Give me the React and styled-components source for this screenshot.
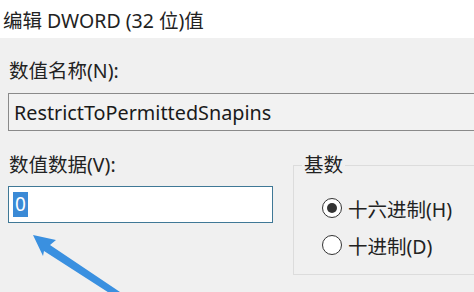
import styled, { createGlobalStyle } from 'styled-components';

const GlobalStyle = createGlobalStyle`
  html, body {
    margin: 0;
    padding: 0;
    background: #f0f0f0;
  }
  body {
    font-family: "Segoe UI", "Noto Sans", "Noto Sans CJK SC", sans-serif;
    color: #1a1a1a;
  }
`;

const Dialog = styled.div`
  position: relative;
  width: 474px;
  height: 292px;
  overflow: hidden;
  background: #f0f0f0;
`;

const TitleBar = styled.div`
  height: 38px;
  background: #ffffff;
  display: flex;
  align-items: center;
  padding-left: 3px;
  font-size: 19.5px;
  color: #222;
`;

const Body = styled.div`
  padding: 20px 0 0 8px;
  display: flex;
  flex-direction: column;
`;

const Label = styled.div`
  font-size: 19.5px;
  line-height: 26px;
  padding-left: 1px;
  color: #222;
`;

const NameBox = styled.div`
  margin-top: 9px;
  width: 490px;
  height: 38px;
  flex-shrink: 0;
  box-sizing: border-box;
  border: 1px solid #8a8a8a;
  background: #f2f2f2;
  display: flex;
  align-items: center;
  padding-left: 5px;
  font-size: 19.8px;
  color: #1a1a1a;
`;

const Row = styled.div`
  display: flex;
  gap: 20px;
  margin-top: 21px;
`;

const Column = styled.div`
  width: 265px;
  flex-shrink: 0;
  display: flex;
  flex-direction: column;
`;

const DataBox = styled.div`
  margin-top: 8px;
  height: 37px;
  box-sizing: border-box;
  border: 1px solid #3f7896;
  background: #ffffff;
  display: flex;
  align-items: center;
  padding-left: 4px;
`;

const Selected = styled.span`
  background: #3b8ad6;
  color: #ffffff;
  font-size: 19px;
  line-height: 25px;
  padding: 0 2px;
`;

const Group = styled.fieldset`
  margin: 0;
  padding: 18px 0 0 28px;
  width: 220px;
  height: 123px;
  flex-shrink: 0;
  box-sizing: border-box;
  border: 1px solid #dcdcdc;
  border-right: none;
  display: flex;
  flex-direction: column;
  gap: 13px;
`;

const Legend = styled.legend`
  font-size: 19.5px;
  line-height: 26px;
  padding: 0 2px;
  margin-left: -20px;
  color: #222;
`;

const Option = styled.label`
  display: flex;
  align-items: center;
  gap: 6px;
  font-size: 19.5px;
  color: #222;
  height: 24px;
`;

const Radio = styled.span`
  width: 20px;
  height: 20px;
  box-sizing: border-box;
  border-radius: 50%;
  border: 1.5px solid #333;
  background: #fff;
  display: flex;
  align-items: center;
  justify-content: center;
  &::after {
    content: '';
    width: 10px;
    height: 10px;
    border-radius: 50%;
    background: ${(p) => (p.checked ? '#333' : 'transparent')};
  }
`;

const Arrow = styled.svg`
  position: absolute;
  left: 0;
  top: 0;
  pointer-events: none;
`;

export default function App() {
  return (
    <Dialog>
      <GlobalStyle />
      <TitleBar>编辑 DWORD (32 位)值</TitleBar>
      <Body>
        <Label>数值名称(N):</Label>
        <NameBox>RestrictToPermittedSnapins</NameBox>
        <Row>
          <Column>
            <Label>数值数据(V):</Label>
            <DataBox>
              <Selected>0</Selected>
            </DataBox>
          </Column>
          <Group>
            <Legend>基数</Legend>
            <Option>
              <Radio checked />
              十六进制(H)
            </Option>
            <Option>
              <Radio />
              十进制(D)
            </Option>
          </Group>
        </Row>
      </Body>
      <Arrow width="474" height="292" viewBox="0 0 474 292">
        <polygon
          points="33,235 56,240 50,245 120,292 114,296 44,251 43,256"
          fill="#3a90e0"
        />
      </Arrow>
    </Dialog>
  );
}
